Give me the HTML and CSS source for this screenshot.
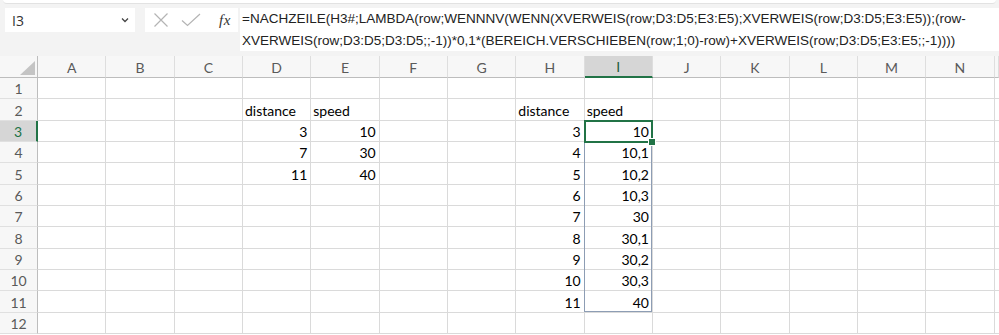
FILE: index.html
```html
<!DOCTYPE html>
<html>
<head>
<meta charset="utf-8">
<link rel="stylesheet" href="styles.css">
</head>
<body>
<div class="topbar">
  <div class="edge"></div>
  <div class="bar">
    <div class="namebox">
      <span>I3</span>
      <svg class="chev" width="8" height="6" viewBox="0 0 8 6"><path d="M1 1.5 L4 4.5 L7 1.5" fill="none" stroke="#444" stroke-width="1.3"/></svg>
    </div>
    <div class="fxbox">
      <svg width="16" height="16" viewBox="0 0 16 16"><path d="M1.5 1.5 L14.5 14.5 M14.5 1.5 L1.5 14.5" stroke="#b4b4b4" stroke-width="1.2" fill="none"/></svg>
      <svg width="20" height="14" viewBox="0 0 20 14"><path d="M1 7.5 L6.5 12.5 L19 1" stroke="#b4b4b4" stroke-width="1.2" fill="none"/></svg>
      <span class="fx">fx</span>
    </div>
    <div class="formula">
      <div>=NACHZEILE(H3#;LAMBDA(row;WENNNV(WENN(XVERWEIS(row;D3:D5;E3:E5);XVERWEIS(row;D3:D5;E3:E5));(row-</div>
      <div>XVERWEIS(row;D3:D5;D3:D5;;-1))*0,1*(BEREICH.VERSCHIEBEN(row;1;0)-row)+XVERWEIS(row;D3:D5;E3:E5;;-1))))</div>
    </div>
  </div>
</div>
<div class="sheet">
  <div class="corner"><span class="tri"></span></div>
  <div class="ch">A</div><div class="ch">B</div><div class="ch">C</div><div class="ch">D</div><div class="ch">E</div><div class="ch">F</div><div class="ch">G</div><div class="ch">H</div><div class="ch sel">I</div><div class="ch">J</div><div class="ch">K</div><div class="ch">L</div><div class="ch">M</div><div class="ch">N</div><div class="ch"></div>

  <div class="rh">1</div>
  <div class="c"></div><div class="c"></div><div class="c"></div><div class="c"></div><div class="c"></div><div class="c"></div><div class="c"></div><div class="c"></div><div class="c"></div><div class="c"></div><div class="c"></div><div class="c"></div><div class="c"></div><div class="c"></div><div class="c"></div>

  <div class="rh">2</div>
  <div class="c"></div><div class="c"></div><div class="c"></div><div class="c l">distance</div><div class="c l">speed</div><div class="c"></div><div class="c"></div><div class="c l">distance</div><div class="c l">speed</div><div class="c"></div><div class="c"></div><div class="c"></div><div class="c"></div><div class="c"></div><div class="c"></div>

  <div class="rh sel">3</div>
  <div class="c"></div><div class="c"></div><div class="c"></div><div class="c r">3</div><div class="c r">10</div><div class="c"></div><div class="c"></div><div class="c r">3</div>
  <div class="c r active">10<span class="spill"></span><span class="cursor"><span class="handle"></span></span></div>
  <div class="c"></div><div class="c"></div><div class="c"></div><div class="c"></div><div class="c"></div><div class="c"></div>

  <div class="rh">4</div>
  <div class="c"></div><div class="c"></div><div class="c"></div><div class="c r">7</div><div class="c r">30</div><div class="c"></div><div class="c"></div><div class="c r">4</div><div class="c r">10,1</div><div class="c"></div><div class="c"></div><div class="c"></div><div class="c"></div><div class="c"></div><div class="c"></div>

  <div class="rh">5</div>
  <div class="c"></div><div class="c"></div><div class="c"></div><div class="c r">11</div><div class="c r">40</div><div class="c"></div><div class="c"></div><div class="c r">5</div><div class="c r">10,2</div><div class="c"></div><div class="c"></div><div class="c"></div><div class="c"></div><div class="c"></div><div class="c"></div>

  <div class="rh">6</div>
  <div class="c"></div><div class="c"></div><div class="c"></div><div class="c"></div><div class="c"></div><div class="c"></div><div class="c"></div><div class="c r">6</div><div class="c r">10,3</div><div class="c"></div><div class="c"></div><div class="c"></div><div class="c"></div><div class="c"></div><div class="c"></div>

  <div class="rh">7</div>
  <div class="c"></div><div class="c"></div><div class="c"></div><div class="c"></div><div class="c"></div><div class="c"></div><div class="c"></div><div class="c r">7</div><div class="c r">30</div><div class="c"></div><div class="c"></div><div class="c"></div><div class="c"></div><div class="c"></div><div class="c"></div>

  <div class="rh">8</div>
  <div class="c"></div><div class="c"></div><div class="c"></div><div class="c"></div><div class="c"></div><div class="c"></div><div class="c"></div><div class="c r">8</div><div class="c r">30,1</div><div class="c"></div><div class="c"></div><div class="c"></div><div class="c"></div><div class="c"></div><div class="c"></div>

  <div class="rh">9</div>
  <div class="c"></div><div class="c"></div><div class="c"></div><div class="c"></div><div class="c"></div><div class="c"></div><div class="c"></div><div class="c r">9</div><div class="c r">30,2</div><div class="c"></div><div class="c"></div><div class="c"></div><div class="c"></div><div class="c"></div><div class="c"></div>

  <div class="rh">10</div>
  <div class="c"></div><div class="c"></div><div class="c"></div><div class="c"></div><div class="c"></div><div class="c"></div><div class="c"></div><div class="c r">10</div><div class="c r">30,3</div><div class="c"></div><div class="c"></div><div class="c"></div><div class="c"></div><div class="c"></div><div class="c"></div>

  <div class="rh">11</div>
  <div class="c"></div><div class="c"></div><div class="c"></div><div class="c"></div><div class="c"></div><div class="c"></div><div class="c"></div><div class="c r">11</div><div class="c r">40</div><div class="c"></div><div class="c"></div><div class="c"></div><div class="c"></div><div class="c"></div><div class="c"></div>

  <div class="rh">12</div>
  <div class="c"></div><div class="c"></div><div class="c"></div><div class="c"></div><div class="c"></div><div class="c"></div><div class="c"></div><div class="c"></div><div class="c"></div><div class="c"></div><div class="c"></div><div class="c"></div><div class="c"></div><div class="c"></div><div class="c"></div>
</div>
</body>
</html>
```

FILE: styles.css
```css
html, body {
  margin: 0;
  padding: 0;
  width: 999px;
  height: 335px;
  overflow: hidden;
  background: #ffffff;
}

.topbar {
  height: 56px;
  background: #f3f3f3;
  display: flex;
  flex-direction: column;
}

.edge {
  height: 3px;
  background: #ffffff;
  border-bottom: 1px solid #e2e2e2;
  border-radius: 0 0 5px 5px;
  margin: 0 3px;
}

.bar {
  display: flex;
  align-items: flex-start;
  padding-left: 5px;
  margin-top: 4px;
}

.namebox {
  width: 130px;
  height: 24px;
  box-sizing: border-box;
  background: #ffffff;
  display: flex;
  align-items: center;
  justify-content: space-between;
  padding: 0 6px 0 7px;
  font: 14px "Open Sans", sans-serif;
  color: #333333;
}

.fxbox {
  margin-left: 10px;
  width: 93px;
  height: 24px;
  box-sizing: border-box;
  background: #ffffff;
  display: flex;
  align-items: center;
  padding-left: 8px;
  gap: 12px;
}

.fx {
  font: italic 15px "Liberation Serif", serif;
  color: #333333;
  margin-left: 6px;
  letter-spacing: 0.5px;
}

.formula {
  margin-left: 2px;
  flex: 1;
  min-width: 0;
  height: 43px;
  box-sizing: border-box;
  background: #ffffff;
  padding: 0 0 0 2px;
  font: 13.5px "Liberation Sans", Arial, sans-serif;
  line-height: 22px;
  color: #222222;
  white-space: nowrap;
  overflow: hidden;
}

.sheet {
  width: 999px;
  display: grid;
  grid-template-columns: 38px repeat(14, 68.33px) minmax(0, 1fr);
  grid-template-rows: 22px repeat(12, 21.33px);
  font: 14px Lato, sans-serif;
  color: #000000;
  overflow: hidden;
}

.corner {
  background: #f7f7f7;
  border-right: 1px solid #bdbdbd;
  border-bottom: 1px solid #bdbdbd;
  box-sizing: border-box;
  position: relative;
}

.tri {
  position: absolute;
  right: 2px;
  bottom: 2px;
  width: 0;
  height: 0;
  border-left: 15px solid transparent;
  border-bottom: 14px solid #c4c4c4;
}

.ch {
  background: #f7f7f7;
  border-bottom: 1px solid #bdbdbd;
  border-right: 1px solid #dedede;
  box-sizing: border-box;
  display: flex;
  align-items: center;
  justify-content: center;
  color: #5a5a5a;
  font-size: 14px;
  padding-top: 1px;
  min-width: 0;
}

.ch.sel {
  background: #d6d6d6;
  border-bottom: 2px solid #217346;
  color: #1e5e3a;
}

.rh {
  background: #f7f7f7;
  border-right: 1px solid #bdbdbd;
  border-bottom: 1px solid #e0e0e0;
  box-sizing: border-box;
  display: flex;
  align-items: flex-end;
  justify-content: center;
  padding-bottom: 1px;
  color: #5a5a5a;
  font-size: 14px;
}

.rh.sel {
  background: #d6d6d6;
  border-right: 2px solid #217346;
  color: #217346;
}

.c {
  border-right: 1px solid #dadada;
  border-bottom: 1px solid #dadada;
  box-sizing: border-box;
  display: flex;
  align-items: flex-end;
  padding: 0 3px 1px 2px;
  white-space: nowrap;
  min-width: 0;
}

.c.l {
  justify-content: flex-start;
}

.c.r {
  justify-content: flex-end;
}

.active {
  position: relative;
}

.spill {
  position: absolute;
  left: -1px;
  top: -1px;
  width: 68px;
  height: 192px;
  border: 1px solid #8d9db4;
  box-sizing: border-box;
  pointer-events: none;
}

.cursor {
  position: absolute;
  left: -1px;
  top: -1px;
  width: 69px;
  height: 23px;
  border: 2px solid #217346;
  box-sizing: border-box;
  pointer-events: none;
}

.handle {
  position: absolute;
  right: -5px;
  bottom: -5px;
  width: 6px;
  height: 6px;
  background: #217346;
  border: 1px solid #ffffff;
}
```
